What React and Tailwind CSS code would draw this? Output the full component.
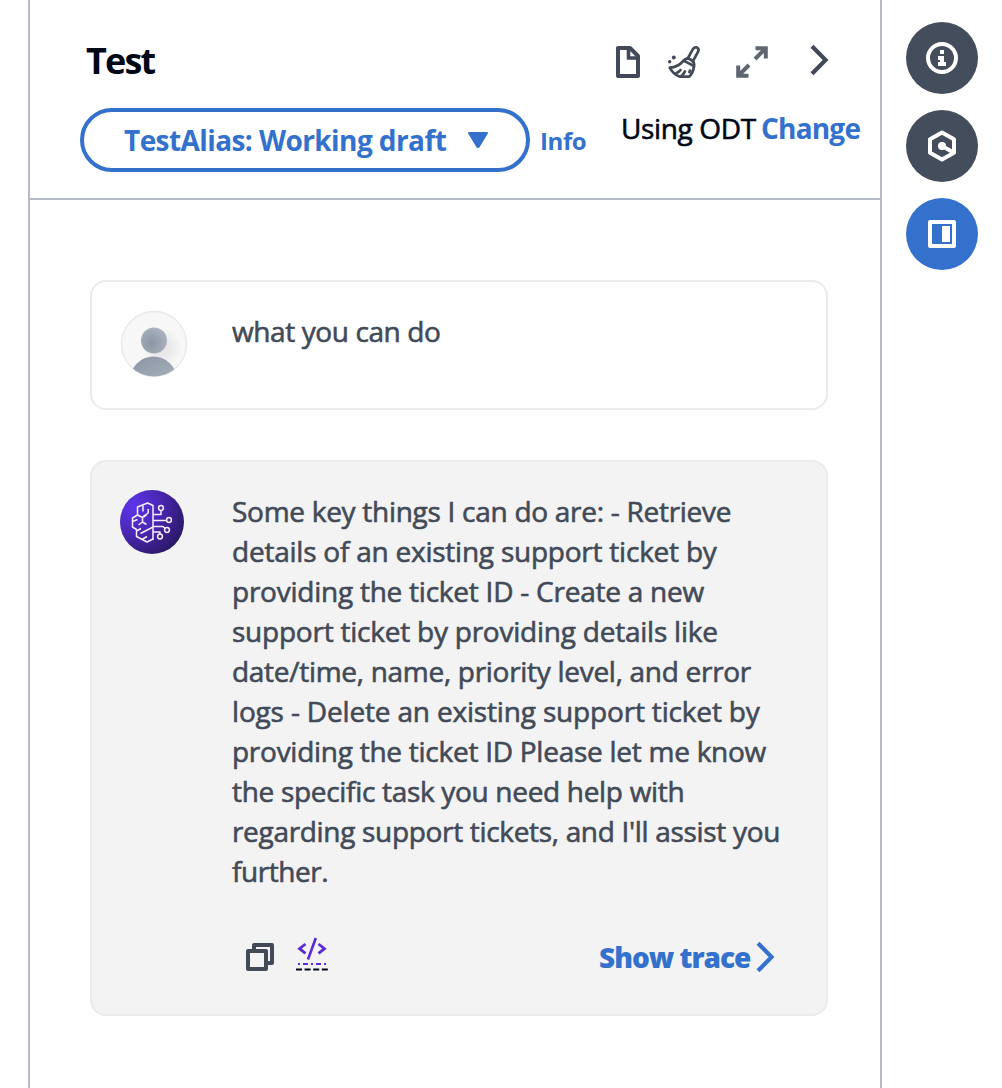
const replyLines = [
  { text: "Some key things I can do are: - Retrieve", tracking: "tracking-[-0.28px]" },
  { text: "details of an existing support ticket by", tracking: "tracking-[-0.23px]" },
  { text: "providing the ticket ID - Create a new", tracking: "tracking-[-0.24px]" },
  { text: "support ticket by providing details like", tracking: "tracking-[-0.23px]" },
  { text: "date/time, name, priority level, and error", tracking: "tracking-[-0.29px]" },
  { text: "logs - Delete an existing support ticket by", tracking: "tracking-[-0.17px]" },
  { text: "providing the ticket ID Please let me know", tracking: "tracking-[-0.26px]" },
  { text: "the specific task you need help with", tracking: "tracking-[-0.31px]" },
  { text: "regarding support tickets, and I'll assist you", tracking: "tracking-[-0.32px]" },
  { text: "further.", tracking: "tracking-[-0.45px]" },
];

function FileIcon() {
  return (
    <svg className="h-8 w-6 shrink-0" viewBox="0 0 24 32" fill="none" stroke="#424a58" strokeWidth="4" strokeLinejoin="round">
      <path d="M2 2H14L22 10V30H2Z" />
      <path d="M12.5 3V12H21" strokeWidth="3.6" strokeLinejoin="miter" />
    </svg>
  );
}

function BroomIcon() {
  return (
    <svg className="h-8 w-8 shrink-0" viewBox="0 0 32 32" fill="none" stroke="#424a58" strokeWidth="2.7" strokeLinecap="round" strokeLinejoin="round">
      <path d="M19.6 12.6 24.9 3.2C26 1.3 28 .9 29.2 1.7C30.6 2.6 30.9 4 30 5.8L24.8 15.4" />
      <path d="M15.6 14.6C17.6 12.4 20.2 12.2 22.9 13.7C25.5 15.2 26.5 17.4 26 20" />
      <path d="M15.6 14.6C12 19 7.5 21.4 1.8 21.6C4 26 7 28.8 11.5 30.6H21.4C23.9 28 25.5 24.2 26 20Z" />
      <path d="M8.6 27C10.3 26.3 11.5 25.3 12.5 24M13.5 30C15 28.6 16.2 27 17 25.4M21.4 26.2 21.9 24.6" />
      <circle cx="5.8" cy="11.6" r="2" fill="#424a58" stroke="none" />
      <circle cx="1.7" cy="15.7" r="1.7" fill="#424a58" stroke="none" />
    </svg>
  );
}

function ExpandIcon() {
  return (
    <svg className="h-8 w-8 shrink-0" viewBox="0 0 32 32" fill="none" stroke="#5f6670" strokeWidth="4">
      <path d="M19.5 2.2H29.8V12.5M29 3 19 13" />
      <path d="M2.2 19.5V29.8H12.5M3 29 13 19" />
    </svg>
  );
}

function ChevronIcon({ className }) {
  return (
    <svg className={className} viewBox="0 0 20 32" fill="none" stroke="currentColor" strokeWidth="4.1">
      <path d="M2 2.2 15.6 16 2 29.8" />
    </svg>
  );
}

function UserAvatar() {
  return (
    <svg className="h-[68px] w-[68px] shrink-0" viewBox="0 0 68 68">
      <defs>
        <radialGradient id="head" cx="0.4" cy="0.6" r="0.7">
          <stop offset="0" stopColor="#8a95a4" />
          <stop offset="1" stopColor="#aeb6c1" />
        </radialGradient>
        <linearGradient id="torso" x1="0" y1="0" x2="0.5" y2="1">
          <stop offset="0" stopColor="#8b95a3" />
          <stop offset="1" stopColor="#adb6c2" />
        </linearGradient>
        <radialGradient id="shade">
          <stop offset="0.3" stopColor="#e8e8e8" />
          <stop offset="1" stopColor="#f7f7f7" />
        </radialGradient>
        <clipPath id="disc"><circle cx="34" cy="34" r="32.5" /></clipPath>
      </defs>
      <circle cx="34" cy="34" r="32.5" fill="#f7f7f7" stroke="#e9e9eb" strokeWidth="1.3" />
      <g clipPath="url(#disc)">
        <circle cx="42" cy="38" r="20" fill="url(#shade)" />
        <circle cx="34" cy="30.5" r="13" fill="url(#head)" />
        <circle cx="33.5" cy="70" r="23.5" fill="url(#torso)" />
      </g>
    </svg>
  );
}

function AgentAvatar() {
  return (
    <svg className="h-16 w-16 shrink-0" viewBox="0 0 64 64" fill="none">
      <defs>
        <radialGradient id="agent" cx="0.2" cy="0.25" r="0.85">
          <stop offset="0" stopColor="#5f35ea" />
          <stop offset="0.5" stopColor="#4a27b5" />
          <stop offset="1" stopColor="#2c1a6b" />
        </radialGradient>
      </defs>
      <circle cx="32" cy="32" r="32" fill="url(#agent)" />
      <g stroke="#f5edff" strokeWidth="1.5" strokeLinejoin="round">
        <path d="M33 50V15.5L27.5 13 17.5 17V25L12.5 28V37L16.5 39.5V46.5L27 52 33 49" />
        <path d="M23 15.5V21.5M28.2 19V23L23 26.5M17.5 25 22.5 27.5 26.5 25M22.5 27.5V32L18.5 35M12.5 31.5 17.5 29.5M22.5 32 26.5 34.5M16.5 41 21 38.5M20.5 43.5 33 37M22 49.5 27 46.5" />
        <path d="M33 24.5H41V20.5M33 30.5H46.5M33 36.5H43L45 38.5M33 42H40V44.5" />
        <circle cx="41" cy="18" r="2.4" />
        <circle cx="49" cy="30" r="2.4" />
        <circle cx="47" cy="40" r="2.4" />
        <circle cx="40" cy="46.5" r="2.4" />
      </g>
    </svg>
  );
}

function CopyIcon() {
  return (
    <svg className="h-7 w-7" viewBox="0 0 28 28" fill="none" stroke="#424a58" strokeWidth="4" strokeLinejoin="round">
      <path d="M8 8V2H26V20H20" />
      <path d="M2 8H20V26H2Z" />
    </svg>
  );
}

function CodeIcon() {
  return (
    <svg className="h-9 w-8" viewBox="0 0 32 36" fill="none">
      <g stroke="#5b2bd6" strokeWidth="2.8">
        <path d="M9.5 8 3.5 12.7 9.5 17.4M22.5 8 28.5 12.7 22.5 17.4" />
        <path d="M19.8 2 12 23.5" strokeWidth="2.6" />
        <path d="M2 28H30" strokeWidth="1.8" strokeDasharray="2 3 5 3" />
      </g>
      <path d="M0 33.5H32" stroke="#000716" strokeWidth="2" strokeDasharray="6 2.6" />
    </svg>
  );
}

function InfoGlyph() {
  return (
    <svg className="h-8 w-8" viewBox="0 0 32 32" fill="none">
      <circle cx="16" cy="16" r="14" stroke="white" strokeWidth="4" />
      <path d="M14 8H18V12H14ZM12 14H18V20H20V24H12V20H14V18H12Z" fill="white" />
    </svg>
  );
}

function HexGlyph() {
  return (
    <svg className="h-8 w-8" viewBox="0 0 32 32" fill="none" stroke="white" strokeWidth="4">
      <path d="M16 2.5 28 9.2V22.8L16 29.5 4 22.8V9.2Z" strokeLinejoin="round" />
      <path d="M16 16 27.5 22.5" />
      <circle cx="16" cy="16" r="4" fill="white" stroke="none" />
    </svg>
  );
}

function PanelGlyph() {
  return (
    <svg className="h-7 w-7" viewBox="0 0 28 28" fill="none">
      <rect x="2" y="2" width="24" height="24" stroke="white" strokeWidth="4" strokeLinejoin="round" />
      <path d="M14 6H22V22H14Z" fill="white" />
    </svg>
  );
}

function RailButton({ active, label, children }) {
  return (
    <button
      aria-label={label}
      className={`flex h-[72px] w-[72px] items-center justify-center rounded-full ${active ? "bg-[#3371cd]" : "bg-[#434d5c]"}`}
    >
      {children}
    </button>
  );
}

export default function App() {
  return (
    <div className="flex h-[1088px] w-[1002px] overflow-hidden bg-white pl-7 font-['Open_Sans',sans-serif] whitespace-nowrap">
      <main className="flex w-[854px] shrink-0 flex-col border-x-2 border-[#b6bac8]">
        <header className="h-[200px] shrink-0 border-b-2 border-[#b6bac8]">
          <div className="flex h-[108px] items-start justify-between pr-[50px] pl-14">
            <h1 className="pt-[37px] text-4xl leading-[48px] font-bold tracking-[-1.8px] text-[#000716]">Test</h1>
            <div className="flex pt-[46px]">
              <FileIcon />
              <div className="ml-7"><BroomIcon /></div>
              <div className="ml-9"><ExpandIcon /></div>
              <ChevronIcon className="-mt-0.5 ml-[42px] h-8 w-5 text-[#424a58]" />
            </div>
          </div>
          <div className="flex items-start pl-[50px]">
            <button className="flex h-16 w-[450px] items-center rounded-full border-4 border-[#3371cd] pl-10 text-[#3371cd]">
              <span className="w-[344px] text-left text-[28px] leading-10 font-bold tracking-[-0.58px]">TestAlias: Working draft</span>
              <svg className="h-4 w-5" viewBox="0 0 20 16" fill="currentColor" stroke="currentColor" strokeWidth="2" strokeLinejoin="round">
                <path d="M1 1H19L10.5 15H9.5Z" />
              </svg>
            </button>
            <a className="mt-[17px] ml-2.5 w-[81px] text-2xl leading-8 font-bold tracking-[-0.4px] text-[#3371cd]">Info</a>
            <p className="w-[140px] text-[28px] leading-10 tracking-[-0.35px] text-[#000716] [-webkit-text-stroke:0.6px]">Using ODT</p>
            <a className="text-[28px] leading-10 font-bold tracking-[-0.8px] text-[#3371cd]">Change</a>
          </div>
        </header>

        <section className="flex flex-col gap-[50px] pt-20 pl-[60px] text-[28px] leading-10 text-[#424a58] [-webkit-text-stroke:0.6px]">
          <article className="flex h-[130px] w-[738px] rounded-2xl border-2 border-[#e9ebed] bg-white pt-7 pl-7">
            <UserAvatar />
            <p className="mt-px ml-11 tracking-[-0.4px]">what you can do</p>
          </article>

          <article className="h-[556px] w-[738px] rounded-2xl border-2 border-[#ebebeb] bg-[#f3f3f3] pt-7 pl-7">
            <div className="flex">
              <AgentAvatar />
              <p className="mt-px ml-12">
                {replyLines.map((line) => (
                  <span key={line.text} className={`block ${line.tracking}`}>{line.text}</span>
                ))}
              </p>
            </div>
            <div className="mt-[43px] flex pl-[126px]">
              <div className="pt-[9px]"><CopyIcon /></div>
              <div className="ml-[22px] pt-[2px]"><CodeIcon /></div>
              <a className="ml-[271px] flex pt-[3px] text-[#3371cd]">
                <span className="w-[157px] font-extrabold tracking-[-1px] [-webkit-text-stroke:0]">Show trace</span>
                <ChevronIcon className="mt-1 h-8 w-5" />
              </a>
            </div>
          </article>
        </section>
      </main>

      <nav className="flex flex-col gap-4 pt-[22px] pl-6">
        <RailButton label="Info"><InfoGlyph /></RailButton>
        <RailButton label="Tutorials"><HexGlyph /></RailButton>
        <RailButton label="Panel" active><PanelGlyph /></RailButton>
      </nav>
    </div>
  );
}
